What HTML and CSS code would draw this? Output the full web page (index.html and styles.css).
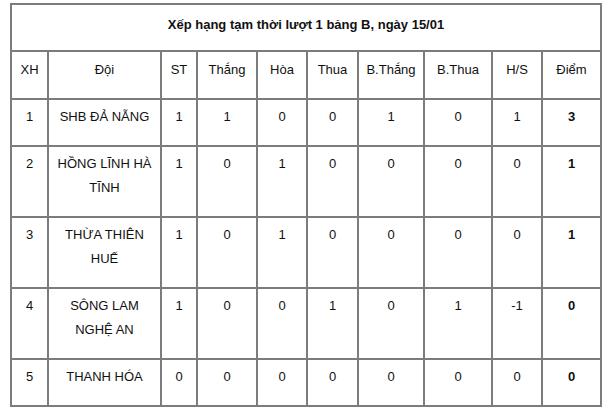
FILE: index.html
```html
<!DOCTYPE html>
<html lang="vi">
<head>
<meta charset="utf-8">
<title>Bảng xếp hạng</title>
<link rel="stylesheet" href="styles.css">
</head>
<body>
<table class="standings">
  <colgroup>
    <col class="c-xh"><col class="c-team"><col class="c-st"><col class="c-w">
    <col class="c-d"><col class="c-l"><col class="c-gf"><col class="c-ga">
    <col class="c-gd"><col class="c-pts">
  </colgroup>
  <tr class="title-row"><td colspan="10">Xếp hạng tạm thời lượt 1 bảng B, ngày 15/01</td></tr>
  <tr class="head-row">
    <td>XH</td><td>Đội</td><td>ST</td><td>Thắng</td><td>Hòa</td><td>Thua</td><td>B.Thắng</td><td>B.Thua</td><td>H/S</td><td>Điểm</td>
  </tr>
  <tr><td>1</td><td>SHB ĐẢ NẴNG</td><td>1</td><td>1</td><td>0</td><td>0</td><td>1</td><td>0</td><td>1</td><td class="pts">3</td></tr>
  <tr><td>2</td><td>HỒNG LĨNH HÀ TĨNH</td><td>1</td><td>0</td><td>1</td><td>0</td><td>0</td><td>0</td><td>0</td><td class="pts">1</td></tr>
  <tr><td>3</td><td>THỪA THIÊN HUẾ</td><td>1</td><td>0</td><td>1</td><td>0</td><td>0</td><td>0</td><td>0</td><td class="pts">1</td></tr>
  <tr><td>4</td><td>SÔNG LAM NGHỆ AN</td><td>1</td><td>0</td><td>0</td><td>1</td><td>0</td><td>1</td><td>-1</td><td class="pts">0</td></tr>
  <tr><td>5</td><td>THANH HÓA</td><td>0</td><td>0</td><td>0</td><td>0</td><td>0</td><td>0</td><td>0</td><td class="pts">0</td></tr>
</table>
</body>
</html>
```
FILE: styles.css
```css
html, body {
  margin: 0;
  padding: 0;
  background: #fff;
}
body {
  font-family: "Liberation Sans", Arial, sans-serif;
  font-size: 13px;
  color: #111;
}
.standings {
  margin: 3px 0 0 10px;
  width: 591px;
  table-layout: fixed;
  border-collapse: collapse;
}
.standings td {
  border: 2px solid #7c7c7c;
  text-align: center;
  vertical-align: top;
  line-height: 24px;
  padding: 5px 4px 16px;
}
.title-row td {
  font-weight: bold;
  padding: 8px 4px 13px;
}
.head-row td {
  padding: 6px 2px 16px;
}
.pts {
  font-weight: bold;
}
.c-xh { width: 37px; }
.c-team { width: 113px; }
.c-st { width: 36px; }
.c-w { width: 60px; }
.c-d { width: 50px; }
.c-l { width: 51px; }
.c-gf { width: 66px; }
.c-ga { width: 68px; }
.c-gd { width: 50px; }
.c-pts { width: 59px; }
```
